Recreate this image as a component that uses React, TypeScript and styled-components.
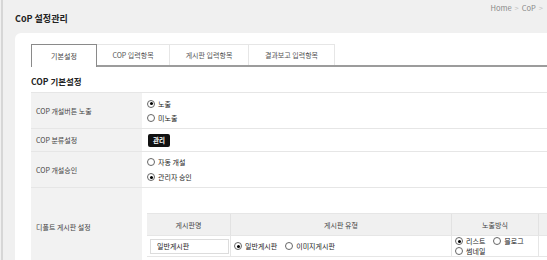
import React from 'react';
import styled, { createGlobalStyle, css } from 'styled-components';

//styles
const GlobalStyle = createGlobalStyle`
  html, body {
    margin: 0;
    padding: 0;
    overflow: hidden;
    background: #f0f0f0;
  }
  body {
    font-family: 'Noto Sans CJK KR', 'Noto Sans', sans-serif;
    color: #333;
  }
`;

const Page = styled.div`
  width: 544px;
  min-height: 260px;
  margin-left: 1px;
  border-left: 2px solid #d6d6d6;
  overflow: hidden;
`;

const PageHeader = styled.header`
  display: flex;
  justify-content: space-between;
  align-items: flex-start;
  height: 33px;
  padding: 0 4px 0 12px;
`;

const PageTitle = styled.h1`
  margin: 13px 0 0;
  font-size: 9px;
  line-height: 12px;
  font-weight: 700;
  color: #222;
`;

const Breadcrumb = styled.nav`
  display: flex;
  gap: 3px;
  margin-top: 2px;
  font-size: 7.5px;
  line-height: 11px;
  color: #888;
  white-space: nowrap;
`;

const Crumb = styled.span<{ sep?: boolean }>`
  ${(p) =>
    p.sep &&
    css`
      color: #c4c4c4;
    `}
`;

const Card = styled.section`
  margin-left: 12px;
  padding: 11px 0 0 16px;
  background: #fff;
  border-radius: 6px 0 0 0;
  min-height: 240px;
  overflow: hidden;
`;

const TabList = styled.div`
  display: flex;
  height: 21px;
  border-bottom: 2px solid #9c9c9c;
`;

const Tab = styled.div<{ active?: boolean; w: number }>`
  display: flex;
  align-items: center;
  justify-content: center;
  width: ${(p) => p.w}px;
  height: 21px;
  box-sizing: border-box;
  font-size: 7px;
  color: #555;
  border-top: 1px solid #e6e6e6;
  border-right: 1px solid #e6e6e6;
  ${(p) =>
    p.active &&
    css`
      height: 23px;
      margin-bottom: -2px;
      background: #fff;
      color: #444;
      border: 1px solid #8a8a8a;
      border-bottom: none;
    `}
`;

const SectionTitle = styled.h2`
  margin: 8px 0 5px;
  font-size: 8.5px;
  line-height: 12px;
  font-weight: 700;
  color: #222;
`;

const FormTable = styled.div`
  display: grid;
  grid-template-columns: 111px 1fr;
  border-top: 1px solid #e6e6e6;
`;

const Label = styled.div<{ h: number }>`
  display: flex;
  align-items: center;
  height: ${(p) => p.h}px;
  padding-left: 5px;
  background: #f2f2f2;
  border-bottom: 1px solid #e6e6e6;
  font-size: 7px;
  color: #444;
`;

const Value = styled.div<{ h: number; top?: number }>`
  display: flex;
  flex-direction: column;
  justify-content: ${(p) => (p.top ? 'flex-start' : 'center')};
  height: ${(p) => p.h}px;
  padding: ${(p) => p.top ?? 0}px 0 0 5px;
  box-sizing: border-box;
  border-bottom: 1px solid #e6e6e6;
`;

const OptionLine = styled.div<{ lh?: number }>`
  display: flex;
  align-items: center;
  gap: 8px;
  height: ${(p) => p.lh ?? 14}px;
`;

const Option = styled.label`
  display: flex;
  align-items: center;
  gap: 3px;
  font-size: 7px;
  color: #222;
  white-space: nowrap;
`;

const RadioMark = styled.span<{ checked?: boolean }>`
  position: relative;
  width: 8px;
  height: 8px;
  box-sizing: border-box;
  border: 1px solid #666;
  border-radius: 50%;
  background: #fff;
  ${(p) =>
    p.checked &&
    css`
      &::after {
        content: '';
        position: absolute;
        left: 1.5px;
        top: 1.5px;
        width: 3px;
        height: 3px;
        border-radius: 50%;
        background: #000;
      }
    `}
`;

const ManageButton = styled.button`
  width: 22px;
  height: 13px;
  margin-left: 1px;
  padding: 0;
  border: none;
  border-radius: 2px;
  background: #111;
  color: #fff;
  font-family: inherit;
  font-size: 6.5px;
  font-weight: 700;
`;

const BoardTable = styled.div`
  display: grid;
  grid-template-columns: 84px 221px 87px 60px;
  width: 452px;
  border-top: 1px solid #e6e6e6;
`;

const BoardHead = styled.div`
  display: flex;
  align-items: center;
  justify-content: center;
  height: 21px;
  background: #f0f0f0;
  border-right: 1px solid #e2e2e2;
  border-bottom: 1px solid #e6e6e6;
  font-size: 7px;
  color: #444;
`;

const BoardCell = styled.div`
  display: flex;
  flex-direction: column;
  justify-content: center;
  height: 20px;
  padding: 0 3px;
  border-right: 1px solid #e6e6e6;
  border-bottom: 1px solid #e6e6e6;
`;

const NameInput = styled.input`
  width: 79px;
  height: 15px;
  box-sizing: border-box;
  padding: 0 6px;
  border: 1px solid #dcdcdc;
  font-family: inherit;
  font-size: 7px;
  color: #222;
`;

function Radio({ label, checked }: { label: string; checked?: boolean }) {
  return (
    <Option>
      <RadioMark checked={checked} />
      {label}
    </Option>
  );
}

export default function App() {
  return (
    <>
      <GlobalStyle />
      <Page>
        <PageHeader>
          <PageTitle>CoP 설정관리</PageTitle>
          <Breadcrumb>
            <Crumb>Home</Crumb>
            <Crumb sep>&gt;</Crumb>
            <Crumb>CoP</Crumb>
            <Crumb sep>&gt;</Crumb>
          </Breadcrumb>
        </PageHeader>

        <Card>
          <TabList>
            <Tab active w={66}>기본설정</Tab>
            <Tab w={73}>COP 입력항목</Tab>
            <Tab w={79}>게시판 입력항목</Tab>
            <Tab w={86}>결과보고 입력항목</Tab>
          </TabList>

          <SectionTitle>COP 기본설정</SectionTitle>

          <FormTable>
            <Label h={35}>COP 개설버튼 노출</Label>
            <Value h={36}>
              <OptionLine>
                <Radio label="노출" checked />
              </OptionLine>
              <OptionLine>
                <Radio label="미노출" />
              </OptionLine>
            </Value>

            <Label h={22}>COP 분류설정</Label>
            <Value h={23}>
              <OptionLine>
                <ManageButton>관리</ManageButton>
              </OptionLine>
            </Value>

            <Label h={35}>COP 개설승인</Label>
            <Value h={36}>
              <OptionLine lh={15}>
                <Radio label="자동 개설" />
              </OptionLine>
              <OptionLine lh={15}>
                <Radio label="관리자 승인" checked />
              </OptionLine>
            </Value>

            <Label h={77}>디폴트 게시판 설정</Label>
            <Value h={78} top={25}>
              <BoardTable>
                <BoardHead>게시판명</BoardHead>
                <BoardHead>게시판 유형</BoardHead>
                <BoardHead>노출방식</BoardHead>
                <BoardHead />

                <BoardCell>
                  <NameInput defaultValue="일반게시판" />
                </BoardCell>
                <BoardCell>
                  <OptionLine>
                    <Radio label="일반게시판" checked />
                    <Radio label="이미지게시판" />
                  </OptionLine>
                </BoardCell>
                <BoardCell>
                  <OptionLine lh={10}>
                    <Radio label="리스트" checked />
                    <Radio label="블로그" />
                  </OptionLine>
                  <OptionLine lh={10}>
                    <Radio label="썸네일" />
                  </OptionLine>
                </BoardCell>
                <BoardCell />
              </BoardTable>
            </Value>
          </FormTable>
        </Card>
      </Page>
    </>
  );
}
